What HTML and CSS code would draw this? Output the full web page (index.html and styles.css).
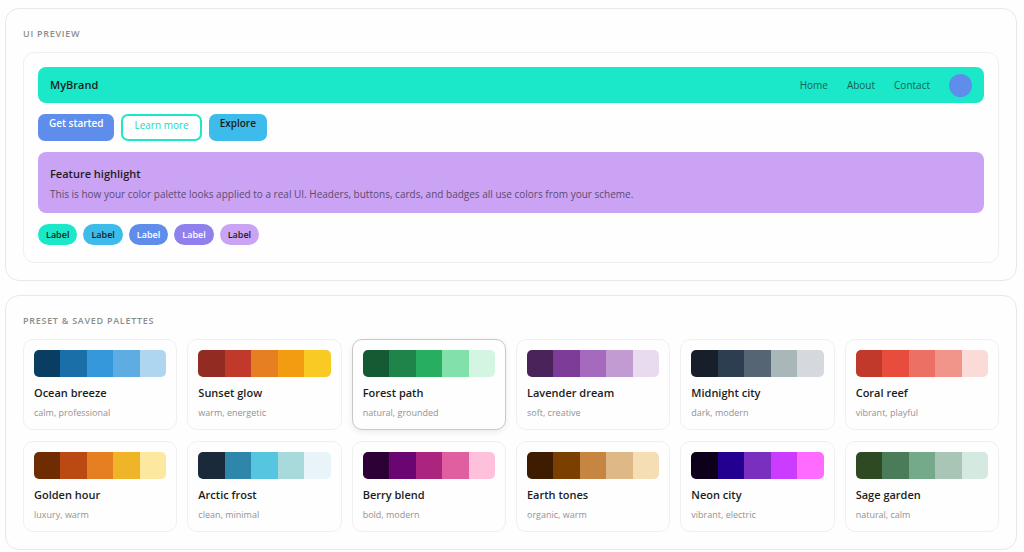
FILE: index.html
```html
<!DOCTYPE html>
<html lang="en">
<head>
  <meta charset="UTF-8">
  <meta name="viewport" content="width=device-width, initial-scale=1.0">
  <title>Color palettes</title>
  <link rel="stylesheet" href="styles.css">
</head>
<body>
  <section class="panel">
    <h2 class="panel-title">UI Preview</h2>
    <div class="preview">
      <header class="navbar">
        <span class="brand">MyBrand</span>
        <nav class="nav-links">
          <a href="#">Home</a>
          <a href="#">About</a>
          <a href="#">Contact</a>
          <span class="avatar"></span>
        </nav>
      </header>
      <div class="buttons">
        <button class="btn btn-primary">Get started</button>
        <button class="btn btn-outline">Learn more</button>
        <button class="btn btn-accent">Explore</button>
      </div>
      <div class="feature">
        <h3>Feature highlight</h3>
        <p>This is how your color palette looks applied to a real UI. Headers, buttons, cards, and badges all use colors from your scheme.</p>
      </div>
      <div class="badges">
        <span class="badge badge-teal">Label</span>
        <span class="badge badge-sky">Label</span>
        <span class="badge badge-blue">Label</span>
        <span class="badge badge-violet">Label</span>
        <span class="badge badge-lilac">Label</span>
      </div>
    </div>
  </section>

  <section class="panel">
    <h2 class="panel-title">Preset &amp; Saved Palettes</h2>
    <div class="palette-grid" id="paletteGrid"></div>
  </section>

  <script>
    const palettes = [
      { name: "Ocean breeze", tags: "calm, professional", colors: ["#0a3d62", "#1a6fa8", "#3498db", "#5dade2", "#aed6f1"] },
      { name: "Sunset glow", tags: "warm, energetic", colors: ["#922b21", "#c0392b", "#e67e22", "#f39c12", "#f9ca24"] },
      { name: "Forest path", tags: "natural, grounded", colors: ["#145a32", "#1e8449", "#27ae60", "#82e0aa", "#d5f5e3"] },
      { name: "Lavender dream", tags: "soft, creative", colors: ["#4a235a", "#7d3c98", "#a569bd", "#c39bd3", "#e8daef"] },
      { name: "Midnight city", tags: "dark, modern", colors: ["#17202a", "#2c3e50", "#566573", "#aab7b8", "#d5d8dc"] },
      { name: "Coral reef", tags: "vibrant, playful", colors: ["#c0392b", "#e74c3c", "#ec7063", "#f1948a", "#fadbd8"] },
      { name: "Golden hour", tags: "luxury, warm", colors: ["#6e2c00", "#ba4a12", "#e67e22", "#f0b429", "#fde8a0"] },
      { name: "Arctic frost", tags: "clean, minimal", colors: ["#1b2a3b", "#2e86ab", "#56c5e0", "#a8dadc", "#e8f4f8"] },
      { name: "Berry blend", tags: "bold, modern", colors: ["#2d0036", "#6a0572", "#ab2480", "#e05fa0", "#ffc0dc"] },
      { name: "Earth tones", tags: "organic, warm", colors: ["#3d1c02", "#7b3f00", "#c68642", "#deb887", "#f5deb3"] },
      { name: "Neon city", tags: "vibrant, electric", colors: ["#0d001a", "#240090", "#7b2fbe", "#cc3cff", "#ff6bff"] },
      { name: "Sage garden", tags: "natural, calm", colors: ["#2d4a22", "#4a7c59", "#74a98a", "#a8c5b5", "#d4e9df"] }
    ];
    const highlighted = "Forest path";

    function renderPalettes() {
      const grid = document.getElementById("paletteGrid");

      palettes.forEach(function(palette) {
        const card = document.createElement("button");
        card.className = "palette-card";
        if (palette.name === highlighted) card.classList.add("active");

        const strip = document.createElement("span");
        strip.className = "strip";
        palette.colors.forEach(function(color) {
          const swatch = document.createElement("span");
          swatch.style.background = color;
          strip.appendChild(swatch);
        });
        card.appendChild(strip);

        const name = document.createElement("span");
        name.className = "palette-name";
        name.textContent = palette.name;
        card.appendChild(name);

        const tags = document.createElement("span");
        tags.className = "palette-tags";
        tags.textContent = palette.tags;
        card.appendChild(tags);

        grid.appendChild(card);
      });
    }

    renderPalettes();
  </script>
</body>
</html>
```

FILE: styles.css
```css
* {
  box-sizing: border-box;
}

body {
  margin: 8px 7px 0 5px;
  background: #fefefe;
  color: #1c1c1c;
  font-family: "Segoe UI", "Open Sans", sans-serif;
  font-size: 11px;
  line-height: 16px;
}

button {
  font: inherit;
  color: inherit;
  cursor: pointer;
}

h2, h3, p {
  margin: 0;
}

.panel {
  padding: 17px;
  margin-bottom: 14px;
  background: #fefefe;
  border: 1px solid #e8e8e8;
  border-radius: 14px;
}

.panel-title {
  margin-bottom: 10px;
  color: #8c8c8c;
  font-size: 9px;
  font-weight: 600;
  letter-spacing: 0.08em;
  text-transform: uppercase;
}

.preview {
  display: flex;
  flex-direction: column;
  gap: 11px;
  padding: 14px 14px 17px;
  border: 1px solid #f0f0f0;
  border-radius: 11px;
}

.navbar {
  display: flex;
  align-items: center;
  justify-content: space-between;
  height: 36px;
  padding: 0 12px;
  background: #1ae8c8;
  border-radius: 8px;
}

.brand {
  font-weight: 600;
}

.nav-links {
  display: flex;
  align-items: center;
  gap: 19px;
}

.nav-links a {
  color: #1b5f55;
  font-size: 10px;
  text-decoration: none;
}

.avatar {
  width: 23px;
  height: 23px;
  background: #5f8dec;
  border-radius: 50%;
}

.buttons {
  display: flex;
  gap: 7px;
}

.btn {
  padding: 1px 11px 10px;
  border: none;
  border-radius: 7px;
  font-size: 10px;
  font-weight: 600;
}

.btn-primary {
  background: #5f8dec;
  color: #fff;
}

.btn-outline {
  padding: 1px 11px 6px;
  border: 2px solid #1ae8c8;
  background: transparent;
  color: #1ad8ba;
  font-weight: 500;
}

.btn-accent {
  background: #3dbbea;
}

.feature {
  padding: 14px 12px 11px;
  background: #cba3f5;
  border-radius: 8px;
}

.feature h3 {
  margin-bottom: 4px;
  font-size: 11px;
  font-weight: 600;
}

.feature p {
  color: #5c4a70;
  font-size: 10px;
}

.badges {
  display: flex;
  gap: 6px;
}

.badge {
  padding: 3px 8px 2px;
  border-radius: 11px;
  font-size: 9px;
  font-weight: 600;
}

.badge-teal {
  background: #1ae8c8;
}

.badge-sky {
  background: #3dbbea;
}

.badge-blue {
  background: #5f8dec;
  color: #fff;
}

.badge-violet {
  background: #8f80ee;
  color: #fff;
}

.badge-lilac {
  background: #cba3f5;
}

.palette-grid {
  display: grid;
  grid-template-columns: repeat(6, 1fr);
  gap: 11px 10px;
}

.palette-card {
  display: flex;
  flex-direction: column;
  padding: 10px 10px 8px;
  background: #fefefe;
  border: 1px solid #f0f0f0;
  border-radius: 10px;
  text-align: left;
}

.palette-card.active {
  border-color: #c8c8c8;
  box-shadow: 0 2px 6px rgba(0, 0, 0, 0.08);
}

.strip {
  display: flex;
  height: 27px;
  margin-bottom: 8px;
  border-radius: 5px;
  overflow: hidden;
}

.strip span {
  flex: 1;
}

.palette-name {
  margin-bottom: 4px;
  font-weight: 600;
}

.palette-tags {
  color: #929292;
  font-size: 9px;
}
```
